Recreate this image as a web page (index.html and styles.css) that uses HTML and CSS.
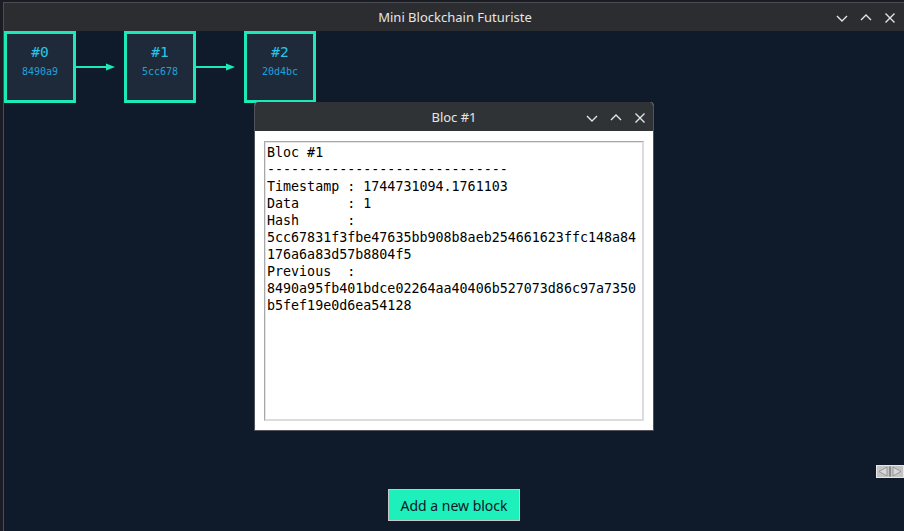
FILE: index.html
```html
<!DOCTYPE html>
<html>
<head>
<meta charset="utf-8">
<title>Mini Blockchain Futuriste</title>
<link rel="stylesheet" href="styles.css">
</head>
<body>
<div class="win">
  <div class="titlebar">
    <span class="title">Mini Blockchain Futuriste</span>
    <div class="controls">
      <svg class="ctl" width="14" height="10" viewBox="0 0 14 10"><path d="M2 3 L7 8 L12 3" fill="none" stroke="#e4e4e4" stroke-width="1.4"/></svg>
      <svg class="ctl" width="14" height="10" viewBox="0 0 14 10"><path d="M2 7 L7 2 L12 7" fill="none" stroke="#e4e4e4" stroke-width="1.4"/></svg>
      <svg class="ctl" width="14" height="12" viewBox="0 0 14 12"><path d="M2.5 1.5 L11.5 10.5 M11.5 1.5 L2.5 10.5" fill="none" stroke="#e4e4e4" stroke-width="1.4"/></svg>
    </div>
  </div>
  <div class="content">
    <div class="chain">
      <div class="block"><div class="bid">#0</div><div class="bhash">8490a9</div></div>
      <svg class="arrow" width="48" height="10" viewBox="0 0 48 10"><line x1="0" y1="5" x2="32" y2="5" stroke="#1de9b6" stroke-width="2"/><polygon points="30,1.5 39,5 30,8.5" fill="#1de9b6"/></svg>
      <div class="block"><div class="bid">#1</div><div class="bhash">5cc678</div></div>
      <svg class="arrow" width="48" height="10" viewBox="0 0 48 10"><line x1="0" y1="5" x2="32" y2="5" stroke="#1de9b6" stroke-width="2"/><polygon points="30,1.5 39,5 30,8.5" fill="#1de9b6"/></svg>
      <div class="block"><div class="bid">#2</div><div class="bhash">20d4bc</div></div>
    </div>
    <div class="footer">
      <button class="addbtn">Add a new block</button>
    </div>
  </div>
</div>

<div class="scroller">
  <svg width="28" height="13" viewBox="0 0 28 13">
    <rect x="0" y="0" width="28" height="13" fill="#c4c4c4"/>
    <rect x="0.5" y="0.5" width="27" height="12" fill="none" stroke="#e8e8e8"/>
    <polygon points="11,2 11,11 3,6.5" fill="#d8d8d8" stroke="#8a8a8a" stroke-width="0.8"/>
    <rect x="13" y="1.5" width="2" height="10" fill="#8a8a8a"/>
    <polygon points="17,2 17,11 25,6.5" fill="#d8d8d8" stroke="#8a8a8a" stroke-width="0.8"/>
  </svg>
</div>

<div class="dialog">
  <div class="dtitlebar">
    <span class="dtitle">Bloc #1</span>
    <div class="controls dcontrols">
      <svg class="ctl" width="14" height="10" viewBox="0 0 14 10"><path d="M2 3 L7 8 L12 3" fill="none" stroke="#e4e4e4" stroke-width="1.4"/></svg>
      <svg class="ctl" width="14" height="10" viewBox="0 0 14 10"><path d="M2 7 L7 2 L12 7" fill="none" stroke="#e4e4e4" stroke-width="1.4"/></svg>
      <svg class="ctl" width="14" height="12" viewBox="0 0 14 12"><path d="M2.5 1.5 L11.5 10.5 M11.5 1.5 L2.5 10.5" fill="none" stroke="#e4e4e4" stroke-width="1.4"/></svg>
    </div>
  </div>
  <div class="dbody">
    <pre class="textbox">Bloc #1
------------------------------
Timestamp : 1744731094.1761103
Data      : 1
Hash      :
5cc67831f3fbe47635bb908b8aeb254661623ffc148a84
176a6a83d57b8804f5
Previous  :
8490a95fb401bdce02264aa40406b527073d86c97a7350
b5fef19e0d6ea54128</pre>
  </div>
</div>
</body>
</html>
```

FILE: styles.css
```css
html, body {
  margin: 0;
  padding: 0;
}
body {
  width: 904px;
  height: 531px;
  overflow: hidden;
  background: #1b1c24;
  font-family: "Noto Sans", "Open Sans", sans-serif;
  position: relative;
}
.win {
  margin: 2px 0 0 3px;
  width: 901px;
  height: 529px;
  box-sizing: border-box;
  border-left: 1px solid #4a4d52;
  border-top: 1px solid #4a4d52;
  display: flex;
  flex-direction: column;
  background: #0f1b2a;
}
.titlebar {
  height: 28px;
  flex: none;
  background: #2b2d30;
  display: flex;
  align-items: center;
  justify-content: center;
  position: relative;
}
.title {
  color: #e6e6e6;
  font-size: 13px;
  padding-left: 2px;
}
.controls {
  position: absolute;
  right: 7px;
  top: 9px;
  display: flex;
  gap: 10px;
  align-items: center;
}
.ctl {
  display: block;
}
.content {
  flex: 1;
  display: flex;
  flex-direction: column;
  background: #0f1b2a;
}
.chain {
  display: flex;
  align-items: center;
  height: 72px;
}
.block {
  width: 72px;
  height: 72px;
  box-sizing: border-box;
  border: 3px solid #1de9b6;
  background: #1e2a3a;
  display: flex;
  flex-direction: column;
  align-items: center;
  font-family: "DejaVu Sans Mono", monospace;
}
.bid {
  color: #28c6e8;
  font-size: 14.5px;
  margin-top: 10px;
  line-height: 17px;
}
.bhash {
  color: #1ea2d6;
  font-size: 10px;
  line-height: 13px;
  margin-top: 4px;
}
.arrow {
  display: block;
}
.footer {
  margin-top: auto;
  display: flex;
  justify-content: center;
  padding-bottom: 10px;
}
.addbtn {
  width: 132px;
  height: 32px;
  background: #1ef0bc;
  border: 1px solid #c8c8c8;
  color: #0d1826;
  font-family: "Noto Sans", "Open Sans", sans-serif;
  font-size: 14px;
  padding: 0;
  margin: 0;
}
.scroller {
  position: absolute;
  left: 876px;
  top: 465px;
  line-height: 0;
}
.dialog {
  position: absolute;
  left: 254px;
  top: 102px;
  width: 400px;
  height: 329px;
  box-sizing: border-box;
  border: 1px solid #50545a;
  border-top: none;
  border-radius: 4px 4px 0 0;
  display: flex;
  flex-direction: column;
  background: #ffffff;
  overflow: hidden;
}
.dtitlebar {
  height: 29px;
  flex: none;
  background: #303336;
  display: flex;
  align-items: center;
  justify-content: center;
  position: relative;
}
.dtitle {
  color: #e6e6e6;
  font-size: 13px;
}
.dcontrols {
  top: 10px;
  right: 6px;
}
.dbody {
  flex: 1;
  padding: 10px 9px 9px 9px;
  display: flex;
  background: #ffffff;
}
.textbox {
  flex: 1;
  margin: 0;
  box-sizing: border-box;
  border: 1px solid #a8a8a8;
  border-right-color: #dcdcdc;
  border-bottom-color: #dcdcdc;
  box-shadow: inset 1px 1px 0 #e4e4e4, inset -1px -1px 0 #dcdcdc;
  padding: 2px 2px;
  font-family: "DejaVu Sans Mono", monospace;
  font-size: 13.33px;
  line-height: 17px;
  color: #000000;
  white-space: pre;
  overflow: hidden;
}
```
